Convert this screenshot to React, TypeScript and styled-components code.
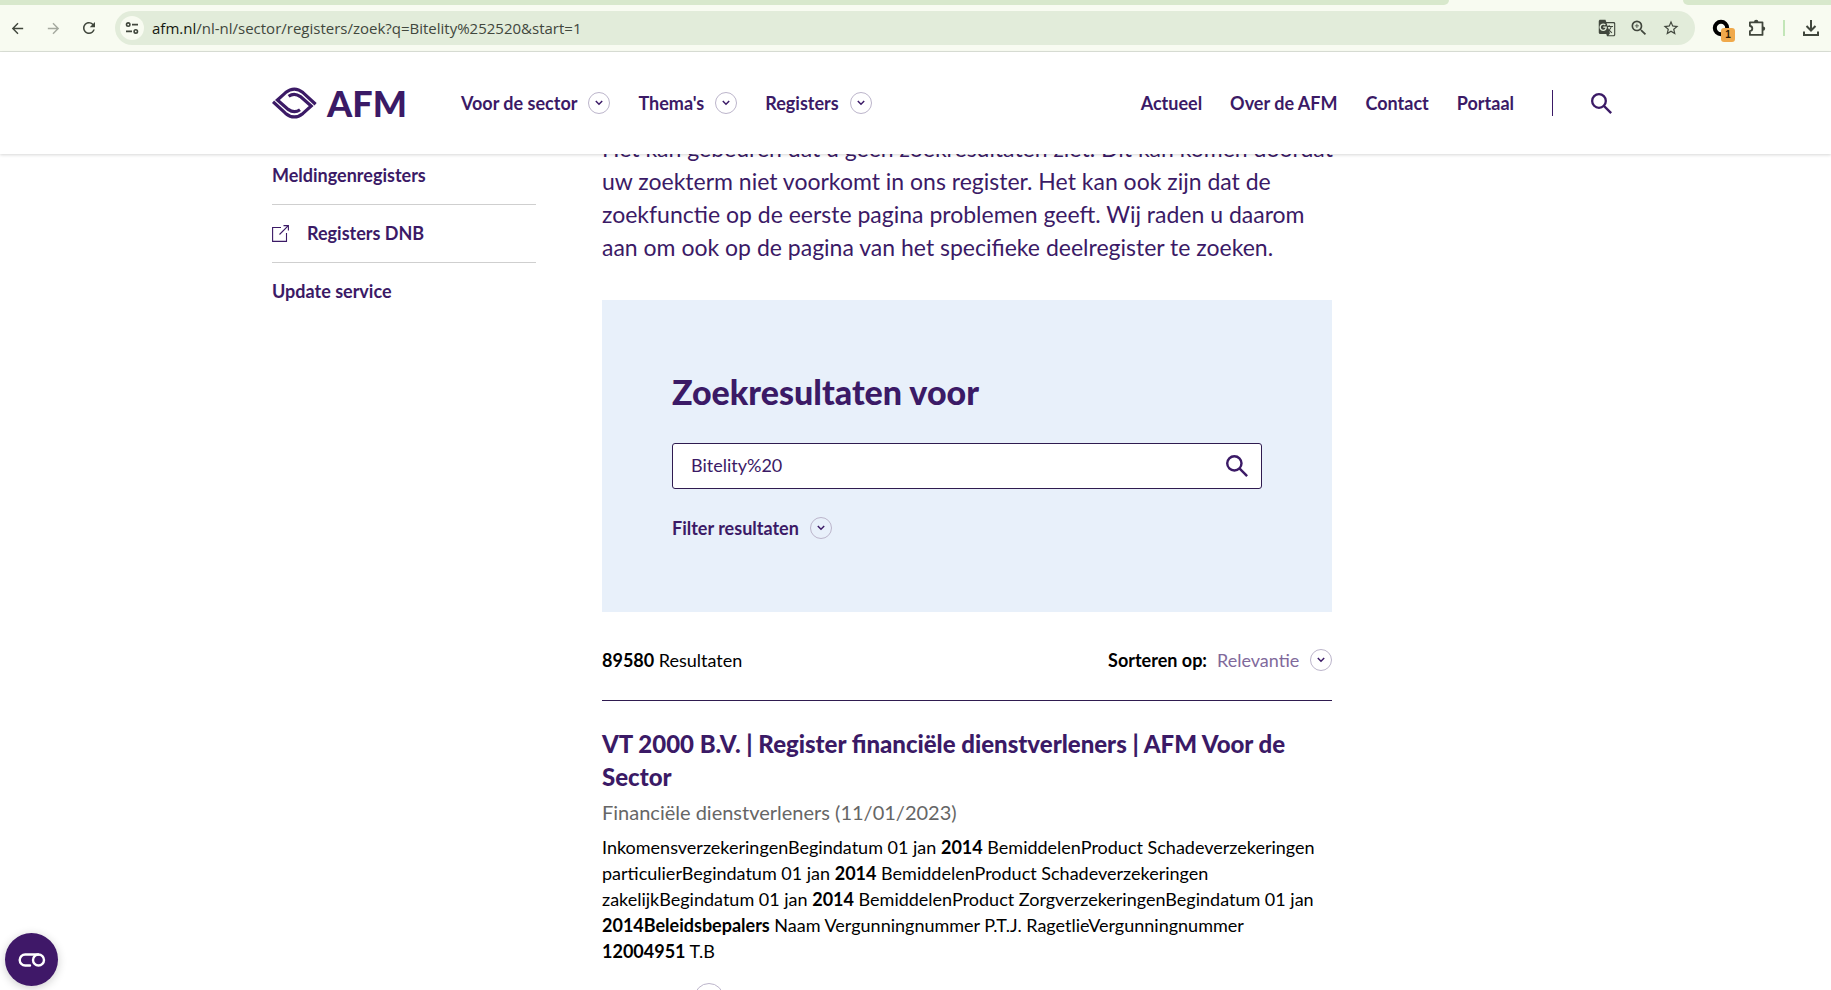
import React, { useState } from "react";
import styled, { createGlobalStyle } from "styled-components";
import {
  MdArrowBack,
  MdArrowForward,
  MdRefresh,
  MdGTranslate,
  MdZoomIn,
  MdStarBorder,
} from "react-icons/md";

const purple = "#3b1a66";
const rule = "#2f1b50";
const ink = "#000000";
const chromeBg = "#f8fbf1";
const chromeTab = "#d8e8cc";
const chromeField = "#e2ecda";
const chromeInk = "#41473d";

const GlobalStyle = createGlobalStyle`
  *, *::before, *::after { box-sizing: border-box; }
  body {
    margin: 0;
    background: #fff;
    color: ${ink};
    font-family: Lato, "Liberation Sans", sans-serif;
    font-size: 18px;
    line-height: 26px;
  }
  button, input, select { font: inherit; color: inherit; }
`;

const Page = styled.div`
  display: flex;
  flex-direction: column;
  height: 100vh;
  overflow: hidden;
`;

/* Browser chrome */

const TabStrip = styled.div`
  display: flex;
  height: 5px;
  flex: none;
  background: ${chromeBg};
`;

const InactiveTabs = styled.div<{ $side: "left" | "right" }>`
  flex: ${(p) => (p.$side === "left" ? "1 1 auto" : "0 0 148px")};
  background: ${chromeTab};
  border-radius: ${(p) => (p.$side === "left" ? "0 0 8px 0" : "0 0 0 8px")};
`;

const ActiveTab = styled.div`
  flex: 0 0 234px;
`;

const Toolbar = styled.div`
  display: flex;
  align-items: center;
  height: 47px;
  flex: none;
  padding: 0 10px 0 7px;
  background: ${chromeBg};
  border-bottom: 1px solid #dde2d8;
  color: ${chromeInk};
`;

const IconButton = styled.button<{ $faded?: boolean }>`
  display: flex;
  align-items: center;
  justify-content: center;
  width: 20px;
  height: 20px;
  padding: 0;
  border: 0;
  background: none;
  opacity: ${(p) => (p.$faded ? 0.45 : 1)};
`;

const HistoryButtons = styled.div`
  display: flex;
  gap: 16px;
`;

const AddressBar = styled.div`
  display: flex;
  align-items: center;
  flex: 1;
  height: 34px;
  margin-left: 16px;
  padding: 0 14px 0 5px;
  border-radius: 17px;
  background: ${chromeField};
`;

const SiteInfo = styled.button`
  display: flex;
  align-items: center;
  justify-content: center;
  width: 24px;
  height: 24px;
  padding: 0;
  border: 0;
  border-radius: 50%;
  background: ${chromeBg};
`;

const Url = styled.div`
  flex: 1;
  margin-left: 8px;
  font-family: "Open Sans", "Noto Sans", sans-serif;
  font-size: 15px;
  line-height: 20px;
  white-space: nowrap;
`;

const Host = styled.span`
  color: #14180f;
`;

const AddressActions = styled.div`
  display: flex;
  gap: 12px;
`;

const Extensions = styled.div`
  display: flex;
  align-items: center;
  gap: 16px;
  margin-left: 16px;
`;

const ExtensionSlot = styled.div`
  position: relative;
  display: flex;
`;

const ExtensionBadge = styled.span`
  position: absolute;
  left: 10px;
  top: 10px;
  width: 14px;
  height: 14px;
  border-radius: 3px;
  background: #f0a94b;
  color: #2b1c05;
  font: 700 10px/14px "Liberation Sans", sans-serif;
  text-align: center;
`;

const ChromeDivider = styled.span`
  width: 2px;
  height: 16px;
  background: #c3e6b8;
`;

/* Site header */

const Header = styled.header`
  position: relative;
  z-index: 1;
  flex: none;
  background: #fff;
  box-shadow: 0 1px 3px rgba(0, 0, 0, 0.16);
`;

const Shell = styled.div`
  max-width: 1340px;
  margin: 0 24px 0 272px;
`;

const HeaderRow = styled(Shell)`
  display: flex;
  align-items: center;
  height: 102px;
`;

const Brand = styled.a`
  display: flex;
  align-items: center;
  gap: 10px;
  color: ${purple};
  font-size: 36px;
  line-height: 34px;
  font-weight: 900;
  text-decoration: none;
`;

const Nav = styled.nav<{ $end?: boolean }>`
  display: flex;
  align-items: center;
  gap: 28px;
  margin-left: ${(p) => (p.$end ? "auto" : "54px")};
`;

const LabelButton = styled.button`
  display: inline-flex;
  align-items: center;
  gap: 11px;
  padding: 0;
  border: 0;
  background: none;
  color: ${purple};
  font-weight: 700;
`;

const NavLink = styled.a`
  color: ${purple};
  font-weight: 700;
  text-decoration: none;
`;

const NavDivider = styled.span`
  width: 1px;
  height: 26px;
  margin: 0 38px;
  background: ${purple};
`;

const SearchButton = styled.button`
  display: flex;
  padding: 0;
  border: 0;
  background: none;
  color: ${purple};
`;

const Round = styled.span<{ $size?: number }>`
  display: inline-flex;
  align-items: center;
  justify-content: center;
  flex: none;
  width: ${(p) => p.$size ?? 22}px;
  height: ${(p) => p.$size ?? 22}px;
  border: 1px solid #bcb5cb;
  border-radius: 50%;
  color: ${purple};
`;

/* Content */

const Viewport = styled.div`
  flex: 1;
  min-height: 0;
  overflow: hidden;
`;

const Columns = styled(Shell)`
  display: grid;
  grid-template-columns: 264px minmax(0, 730px);
  column-gap: 66px;
  margin-top: -22px;
`;

const SideList = styled.ul`
  margin: 0;
  padding: 15px 0 0;
  list-style: none;
`;

const SideItem = styled.li`
  padding: 15px 0 16px;
  border-bottom: 1px solid #cfcfcf;
  &:last-child {
    border-bottom: 0;
  }
`;

const SideLink = styled(NavLink)`
  display: flex;
  align-items: center;
  gap: 18px;
`;

const Intro = styled.p`
  margin: 0;
  color: ${purple};
  font-size: 23px;
  line-height: 33px;
  white-space: nowrap;
`;

const SearchPanel = styled.section`
  margin-top: 36px;
  padding: 70px 70px 71px;
  background: #e8f0fa;
  color: ${purple};
`;

const PanelTitle = styled.h1`
  margin: 0;
  font-size: 34px;
  line-height: 44px;
  font-weight: 900;
`;

const SearchForm = styled.form`
  display: flex;
  align-items: center;
  height: 46px;
  margin: 29px 0 26px;
  padding: 0 13px 0 18px;
  border: 1px solid ${rule};
  border-radius: 3px;
  background: #fff;
`;

const SearchInput = styled.input`
  flex: 1;
  min-width: 0;
  padding: 0 0 2px;
  border: 0;
  outline: 0;
  background: transparent;
`;

const ResultsBar = styled.div`
  display: flex;
  align-items: center;
  justify-content: space-between;
  height: 89px;
  padding-top: 8px;
  border-bottom: 1px solid ${rule};
`;

const SortControl = styled.div`
  display: flex;
  align-items: center;
`;

const SortLabel = styled.label`
  margin-right: 10px;
  font-weight: 700;
`;

const SortSelect = styled.select`
  appearance: none;
  margin-right: 10px;
  padding: 0;
  border: 0;
  background: none;
  color: #80699b;
`;

const ResultTitle = styled.h2`
  margin: 26px 0 0;
  font-size: 24px;
  line-height: 33px;
  font-weight: 900;
`;

const ResultLink = styled.a`
  color: ${purple};
  text-decoration: none;
`;

const ResultMeta = styled.p`
  margin: 5px 0 8px;
  color: #666;
  font-size: 20px;
  line-height: 28px;
`;

const ResultText = styled.p`
  margin: 0;
`;

const MoreButton = styled.button`
  display: flex;
  margin: 19px 0 0 92px;
  padding: 0;
  border: 0;
  background: none;
`;

const ConsentButton = styled.button`
  position: fixed;
  left: 5px;
  bottom: 4px;
  z-index: 2;
  display: flex;
  align-items: center;
  justify-content: center;
  width: 53px;
  height: 53px;
  padding: 0;
  border: 0;
  border-radius: 50%;
  background: #3f1868;
  box-shadow: 0 2px 10px rgba(0, 0, 0, 0.2);
`;

/* Icons */

const LogoMark = () => (
  <svg width="45" height="32" viewBox="0 0 45 32" fill="none" stroke="currentColor" strokeWidth="3.2" aria-hidden="true">
    <path d="M43.6 17.2 31 5.6Q22.3-1.4 13.6 5.6L5.4 13l10.8 9.4q6 4.4 11.8.4" />
    <path d="M1 14.8l12.6 11.6q8.7 7 17.4 0L39.2 19 28.4 9.6q-6-4.4-11.8-.4" />
  </svg>
);

const Chevron = () => (
  <svg width="8" height="6" viewBox="0 0 8 6" fill="none" stroke="currentColor" strokeWidth="1.5" aria-hidden="true">
    <path d="M.8 1 4 4.2 7.2 1" />
  </svg>
);

const SearchIcon = ({ size }: { size: number }) => (
  <svg width={size} height={size} viewBox="0 0 20 20" fill="none" stroke="currentColor" strokeWidth="2.2" aria-hidden="true">
    <circle cx="7.6" cy="7.6" r="6.5" />
    <path d="M12 12l7.2 7.2" />
  </svg>
);

const ExternalIcon = () => (
  <svg width="17" height="17" viewBox="0 0 17 17" fill="none" stroke="currentColor" strokeWidth="1.1" aria-hidden="true">
    <path d="M9 2.500H.6v13.900h13.900V8M7.500 9.500 16.300.7M11.500.6h4.900v4.900" />
  </svg>
);

const TuneIcon = () => (
  <svg width="14" height="14" viewBox="0 0 14 14" fill="none" stroke="currentColor" strokeWidth="1.6" aria-hidden="true">
    <circle cx="3.2" cy="3.6" r="1.7" />
    <path d="M7 3.600h6M1 10.400h6" />
    <circle cx="10.8" cy="10.4" r="1.7" />
  </svg>
);

const RingIcon = () => (
  <svg width="18" height="18" viewBox="0 0 18 18" fill="none" stroke="#000" strokeWidth="4" aria-hidden="true">
    <circle cx="9" cy="9" r="6.2" />
  </svg>
);

const PuzzleIcon = () => (
  <svg width="18" height="18" viewBox="0 0 18 18" aria-hidden="true">
    <path d="M1.900 3.300h12.600v12.600H1.900v-3.700c3.200-.4 3.200-4.800 0-5.200z" fill="none" stroke="currentColor" strokeWidth="1.8" strokeLinejoin="round" />
    <path d="M6 3a2.200 2.200 0 0 1 4.400 0zM15 7.400a2.200 2.200 0 0 1 0 4.400z" fill="currentColor" />
  </svg>
);

const DownloadIcon = () => (
  <svg width="18" height="18" viewBox="0 0 18 18" fill="none" stroke="currentColor" strokeWidth="2" aria-hidden="true">
    <path d="M9 1v10M4.500 7 9 11.500 13.500 7M2 12.500V16h14v-3.500" />
  </svg>
);

const ConsentIcon = () => (
  <svg width="28" height="14" viewBox="0 0 28 14" fill="none" stroke="#fff" strokeWidth="2.4" strokeLinecap="round" aria-hidden="true">
    <path d="M20 1.500H7.200a5.500 5.500 0 0 0 0 11H12" />
    <circle cx="20.5" cy="7" r="5.5" />
  </svg>
);

const sectorMenus = ["Voor de sector", "Thema's", "Registers"];
const siteLinks = ["Actueel", "Over de AFM", "Contact", "Portaal"];

export default function App() {
  const [query, setQuery] = useState("Bitelity%20");

  return (
    <Page>
      <GlobalStyle />
      <TabStrip>
        <InactiveTabs $side="left" />
        <ActiveTab />
        <InactiveTabs $side="right" />
      </TabStrip>
      <Toolbar>
        <HistoryButtons>
          <IconButton aria-label="Back"><MdArrowBack size={17} /></IconButton>
          <IconButton aria-label="Forward" $faded><MdArrowForward size={17} /></IconButton>
          <IconButton aria-label="Reload"><MdRefresh size={18} /></IconButton>
        </HistoryButtons>
        <AddressBar>
          <SiteInfo aria-label="Site information"><TuneIcon /></SiteInfo>
          <Url>
            <Host>afm.nl</Host>/nl-nl/sector/registers/zoek?q=Bitelity%252520&amp;start=1
          </Url>
          <AddressActions>
            <IconButton aria-label="Translate"><MdGTranslate size={18} /></IconButton>
            <IconButton aria-label="Zoom"><MdZoomIn size={20} /></IconButton>
            <IconButton aria-label="Bookmark"><MdStarBorder size={18} /></IconButton>
          </AddressActions>
        </AddressBar>
        <Extensions>
          <ExtensionSlot>
            <IconButton aria-label="Extension"><RingIcon /></IconButton>
            <ExtensionBadge>1</ExtensionBadge>
          </ExtensionSlot>
          <IconButton aria-label="Extensions"><PuzzleIcon /></IconButton>
          <ChromeDivider />
          <IconButton aria-label="Downloads"><DownloadIcon /></IconButton>
        </Extensions>
      </Toolbar>

      <Header>
        <HeaderRow>
          <Brand href="#">
            <LogoMark />
            AFM
          </Brand>
          <Nav>
            {sectorMenus.map((label) => (
              <LabelButton key={label}>
                {label}
                <Round><Chevron /></Round>
              </LabelButton>
            ))}
          </Nav>
          <Nav $end>
            {siteLinks.map((label) => (
              <NavLink key={label} href="#">{label}</NavLink>
            ))}
          </Nav>
          <NavDivider />
          <SearchButton aria-label="Zoeken"><SearchIcon size={21} /></SearchButton>
        </HeaderRow>
      </Header>

      <Viewport>
        <Columns>
          <SideList>
            <SideItem><SideLink href="#">Meldingenregisters</SideLink></SideItem>
            <SideItem><SideLink href="#"><ExternalIcon />Registers DNB</SideLink></SideItem>
            <SideItem><SideLink href="#">Update service</SideLink></SideItem>
          </SideList>
          <main>
            <Intro>
              Het kan gebeuren dat u geen zoekresultaten ziet. Dit kan komen doordat<br />
              uw zoekterm niet voorkomt in ons register. Het kan ook zijn dat de<br />
              zoekfunctie op de eerste pagina problemen geeft. Wij raden u daarom<br />
              aan om ook op de pagina van het specifieke deelregister te zoeken.
            </Intro>
            <SearchPanel>
              <PanelTitle>Zoekresultaten voor</PanelTitle>
              <SearchForm onSubmit={(e) => e.preventDefault()}>
                <SearchInput aria-label="Zoekterm" value={query} onChange={(e) => setQuery(e.target.value)} />
                <SearchButton aria-label="Zoeken"><SearchIcon size={22} /></SearchButton>
              </SearchForm>
              <LabelButton>
                Filter resultaten
                <Round><Chevron /></Round>
              </LabelButton>
            </SearchPanel>
            <ResultsBar>
              <span><strong>89580</strong> Resultaten</span>
              <SortControl>
                <SortLabel htmlFor="sort">Sorteren op:</SortLabel>
                <SortSelect id="sort"><option>Relevantie</option></SortSelect>
                <Round><Chevron /></Round>
              </SortControl>
            </ResultsBar>
            <article>
              <ResultTitle>
                <ResultLink href="#">
                  VT 2000 B.V. | Register financiële dienstverleners | AFM Voor de<br />
                  Sector
                </ResultLink>
              </ResultTitle>
              <ResultMeta>Financiële dienstverleners (11/01/2023)</ResultMeta>
              <ResultText>
                InkomensverzekeringenBegindatum 01 jan <strong>2014</strong> BemiddelenProduct Schadeverzekeringen<br />
                particulierBegindatum 01 jan <strong>2014</strong> BemiddelenProduct Schadeverzekeringen<br />
                zakelijkBegindatum 01 jan <strong>2014</strong> BemiddelenProduct ZorgverzekeringenBegindatum 01 jan<br />
                <strong>2014Beleidsbepalers</strong> Naam Vergunningnummer P.T.J. RagetlieVergunningnummer<br />
                <strong>12004951</strong> T.B
              </ResultText>
              <MoreButton aria-label="Meer"><Round $size={30}><Chevron /></Round></MoreButton>
            </article>
          </main>
        </Columns>
      </Viewport>
      <ConsentButton aria-label="Cookie-instellingen"><ConsentIcon /></ConsentButton>
    </Page>
  );
}
